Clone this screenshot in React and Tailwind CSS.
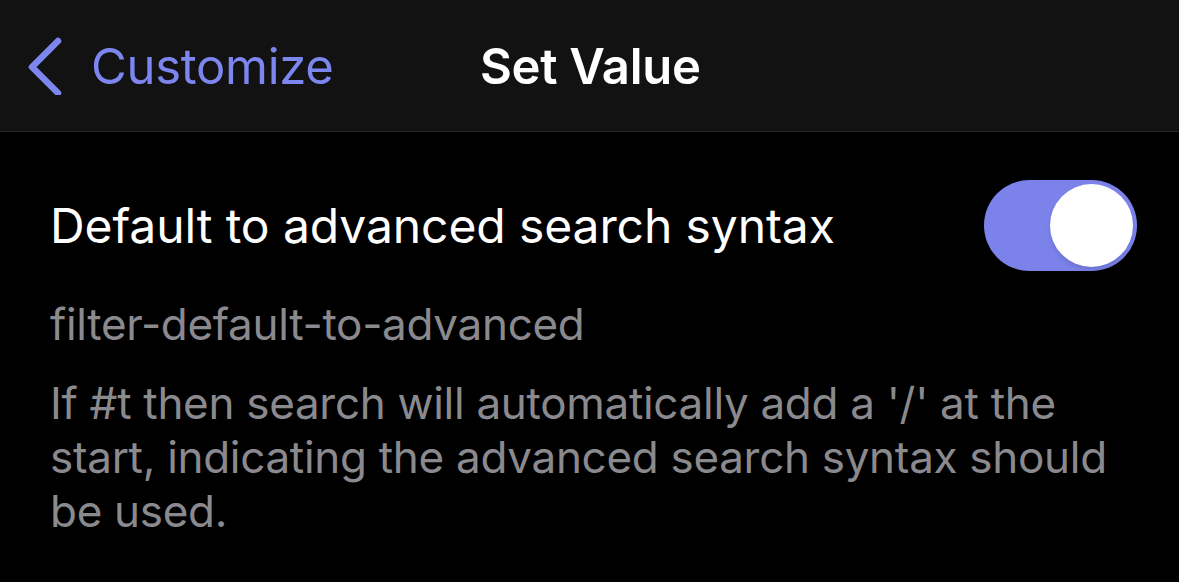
import React from 'react';

const NavBar = () => (
  <header className="relative h-[132px] bg-[#121212] border-b border-[#262626] flex items-center">
    <button className="flex items-center pl-[24px] text-[#7c86ee]">
      <svg width="40" height="60" viewBox="0 0 40 60" fill="none" className="mb-[2px]">
        <path d="M34 6 L8 32 L34 58" stroke="currentColor" strokeWidth="6.5" strokeLinecap="round" strokeLinejoin="round" />
      </svg>
      <span className="ml-[27px] pt-[2px] text-[49px] leading-none tracking-[-0.3px]">Customize</span>
    </button>
    <h1 className="absolute left-[480px] pt-[2px] text-[49px] font-semibold text-white leading-none tracking-[-0.3px]">Set Value</h1>
  </header>
);

const Toggle = () => (
  <div className="w-[153px] h-[91px] rounded-full bg-[#7b83eb] flex items-center justify-end pr-[4px]">
    <div className="w-[83px] h-[83px] rounded-full bg-white shadow-md" />
  </div>
);

export default function App() {
  return (
    <div className="w-[1179px] h-[582px] bg-black overflow-hidden" style={{ fontFamily: 'Inter, "Noto Sans", sans-serif' }}>
      <NavBar />
      <main className="pl-[50px] pr-[42px]">
        <div className="flex items-center justify-between pt-[48px]">
          <span className="text-[48px] text-white leading-none tracking-[-0.1px]">Default to advanced search syntax</span>
          <Toggle />
        </div>
        <p className="mt-[26px] text-[44px] leading-[54px] text-[#8a8a8e] tracking-[-0.3px]">filter-default-to-advanced</p>
        <p className="mt-[25px] w-[1075px] text-[44px] leading-[54px] text-[#8a8a8e] tracking-[-0.3px]">
          If #t then search will automatically add a '/' at the start, indicating the advanced search syntax should be used.
        </p>
      </main>
    </div>
  );
}
